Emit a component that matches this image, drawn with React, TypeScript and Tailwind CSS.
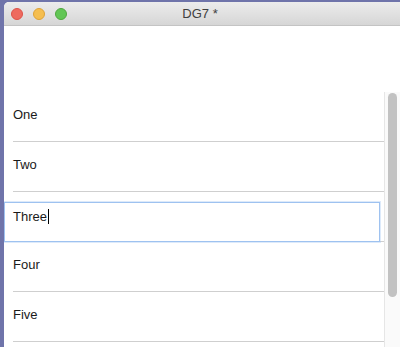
export default function App() {
  const rows = ["One", "Two", "Three", "Four", "Five"];

  return (
    <div className="h-[347px] w-[400px] overflow-hidden bg-[#6f74aa] pl-[4px] pt-[2px] font-['Liberation_Sans',Arial,sans-serif]">
      <div className="flex h-[360px] flex-col overflow-hidden rounded-tl-[5px] bg-white">
        {/* title bar */}
        <div className="relative flex h-[24px] shrink-0 items-center border-b border-[#c4c4c4] bg-gradient-to-b from-[#ececec] to-[#d6d6d6]">
          <div className="flex gap-[10px] pl-[7px]">
            <span className="h-[12px] w-[12px] rounded-full border border-[#dd5248] bg-[#ee6a5f]" />
            <span className="h-[12px] w-[12px] rounded-full border border-[#dea236] bg-[#f5be4f]" />
            <span className="h-[12px] w-[12px] rounded-full border border-[#4fa73f] bg-[#62c655]" />
          </div>
          <div className="absolute inset-0 flex items-center justify-center pr-[4px] text-[13px] text-[#404040]">
            DG7 *
          </div>
        </div>

        <div className="h-[66px] shrink-0" />

        <div className="flex flex-1">
          {/* list */}
          <div className="flex-1">
            {rows.map((label) =>
              label === "Three" ? (
                <div key={label} className="relative h-[50px]">
                  <div className="absolute bottom-0 left-[9px] right-0 h-px bg-[#cfcfcf]" />
                  <div className="absolute bottom-0 left-0 right-[4px] top-[10px] border border-[#9ec2f0] bg-white pl-[8px] pt-[3px] text-[13px] leading-[16px] text-[#1a1a1a] shadow-[0_0_0_1px_rgba(158,194,240,0.35)]">
                    Three
                    <span className="ml-px inline-block h-[15px] w-px translate-y-[3px] bg-black" />
                  </div>
                </div>
              ) : (
                <div key={label} className="h-[50px]">
                  <div className="h-[49px] pl-[9px] pt-[15px] text-[13px] leading-[16px] text-[#1a1a1a]">
                    {label}
                  </div>
                  <div className="ml-[9px] h-px bg-[#cfcfcf]" />
                </div>
              )
            )}
          </div>

          {/* scrollbar */}
          <div className="w-[16px] shrink-0 border-l border-[#e6e6e6] bg-[#fafafa] pl-[3px] pt-[1px]">
            <div className="h-[204px] w-[9px] rounded-full bg-[#c2c2c2]" />
          </div>
        </div>
      </div>
    </div>
  );
}
